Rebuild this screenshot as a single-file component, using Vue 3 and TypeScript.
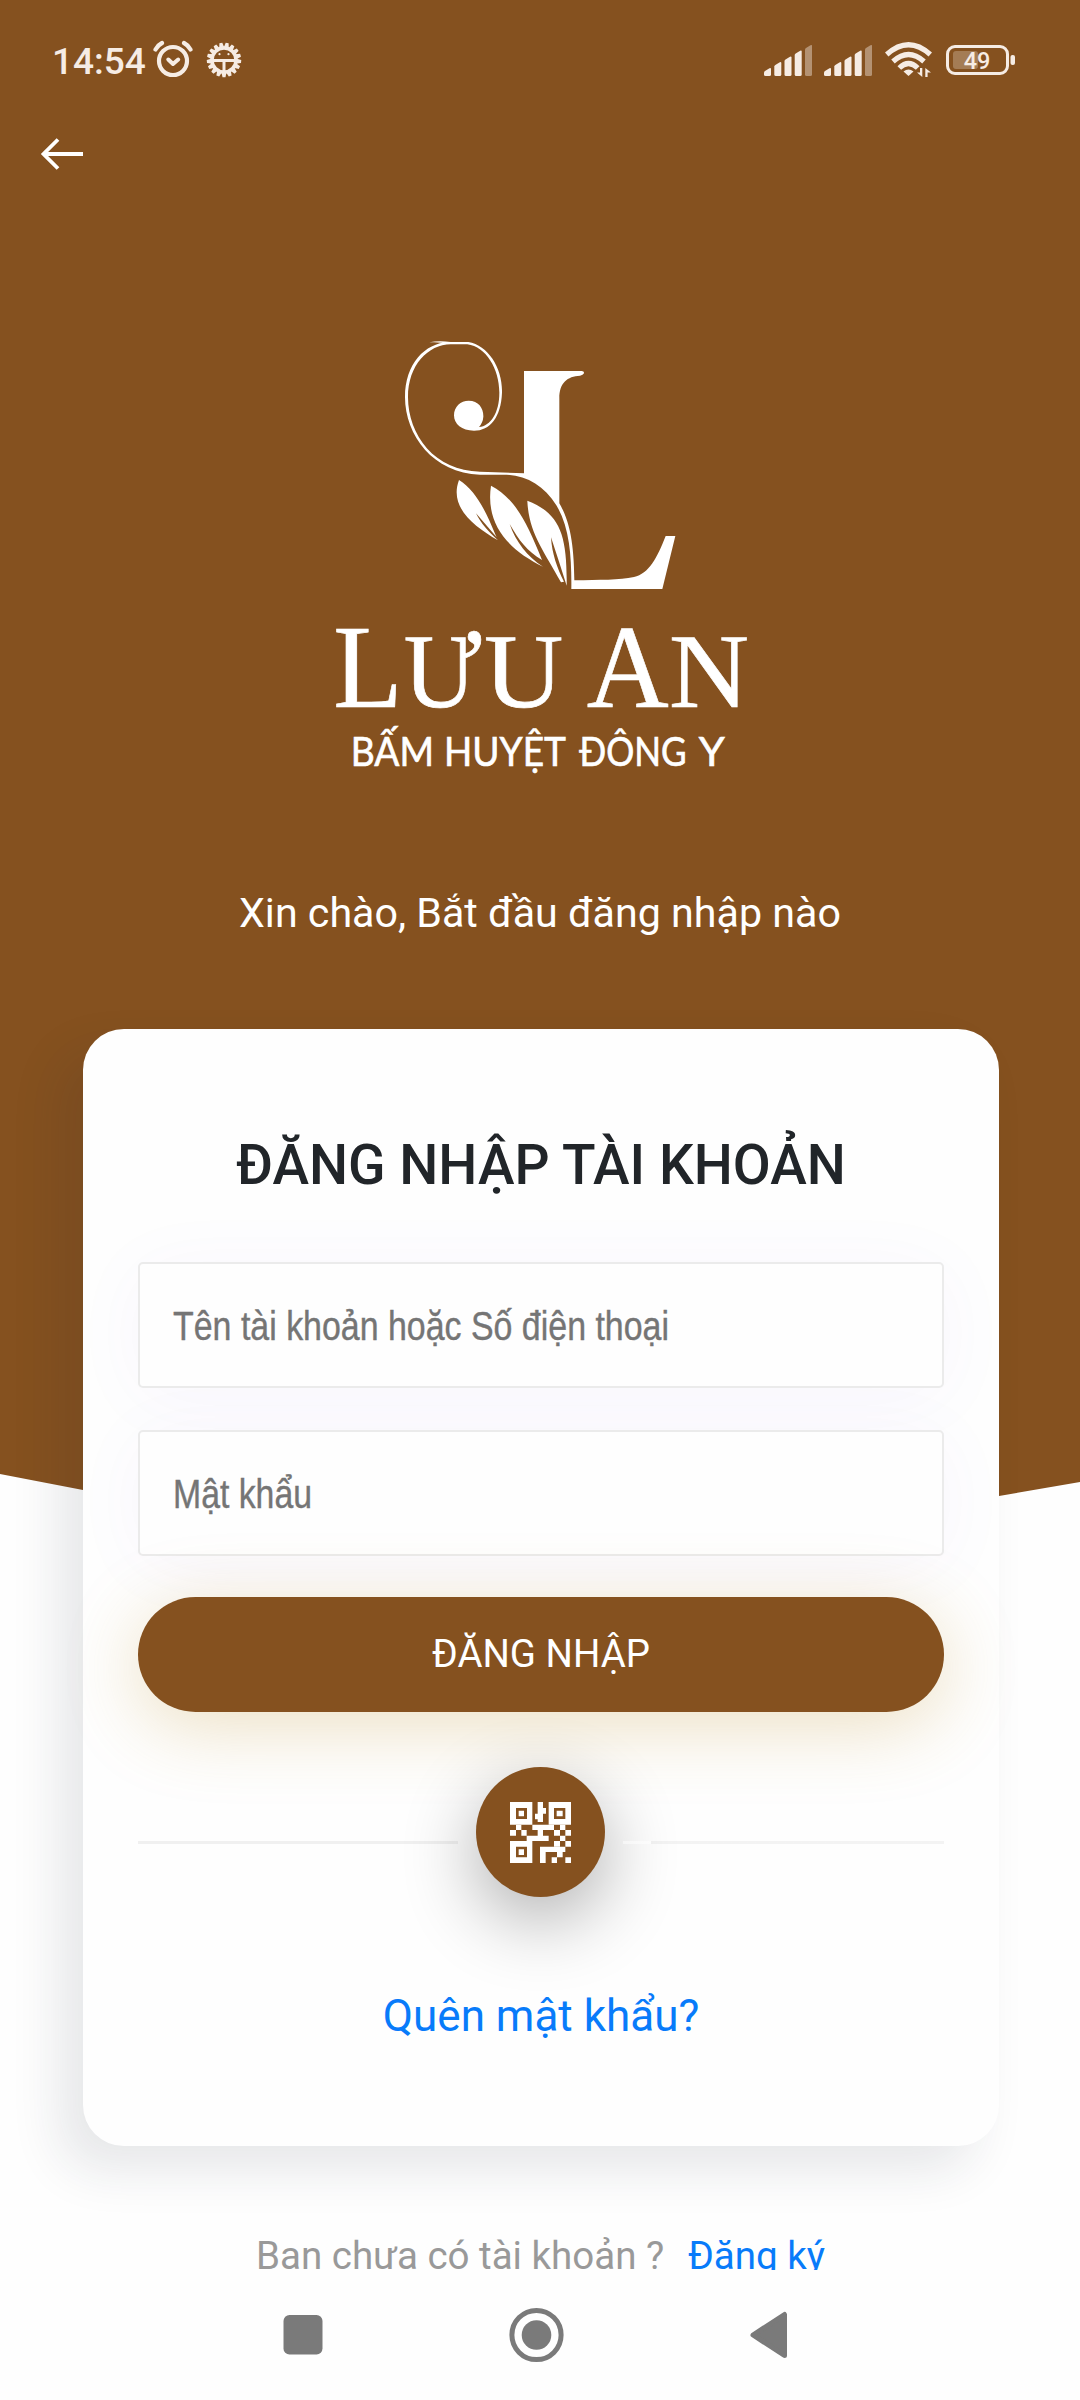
<script setup lang="ts">
interface Bar { x: number; top: number; dim?: boolean }

const bars: Bar[] = [
  { x: 0, top: 23 },
  { x: 10.3, top: 17 },
  { x: 20.5, top: 11.5 },
  { x: 30.7, top: 5.5 },
  { x: 41, top: 0, dim: true },
]
const barPath = (b: Bar): string =>
  `M${b.x + 1.5} 31 h4 q1.5 0 1.5 -1.5 V${b.top + 1} q0 -1.5 -1.5 -.8 L${b.x + 1} ${b.top + 3} q-1 .7 -1 1.6 V29.5 q0 1.5 1.5 1.5z`

const teeth: number[] = Array.from({ length: 17 }, (_, i) => (i * 360) / 17 + 180)

const fields: { id: string; label: string; width: number }[] = [
  { id: 'user', label: 'Tên tài khoản hoặc Số điện thoại', width: 496 },
  { id: 'pass', label: 'Mật khẩu', width: 139 },
]
</script>

<template>
  <div class="screen">
    <svg class="backdrop" width="1080" height="1560" viewBox="0 0 1080 1560">
      <path d="M0 0H1080V1482L999 1496Q540 1570 83 1490L0 1474Z" fill="#85511f" />
    </svg>

    <header class="status">
      <span class="clock">14:54</span>
      <svg class="alarm" width="40" height="38" viewBox="0 0 40 38" fill="none" stroke="#f6ece4">
        <circle cx="20" cy="21" r="14" stroke-width="4.200" />
        <path d="M2.500 9.500Q5 5 9 3M37.500 9.500Q35 5 31 3" stroke-width="4.200" stroke-linecap="round" />
        <path d="M15.300 19.500L20 24L25.200 19.500" stroke-width="4" stroke-linecap="round" stroke-linejoin="round" />
      </svg>
      <svg class="bug" width="36" height="36" viewBox="-18 -18 36 36">
        <path v-for="a in teeth" :key="a" d="M-2.600 -12L-1.500 -17.200H1.500L2.600 -12Z" fill="#f6ece4" :transform="`rotate(${a})`" />
        <circle r="12" fill="none" stroke="#f6ece4" stroke-width="3.400" />
        <path d="M-11 .5H11M0 1V11" stroke="#f6ece4" stroke-width="3" />
        <circle cx="-4.500" cy="-5.800" r="1.100" fill="#f6ece4" />
        <circle cx="4.500" cy="-5.800" r="1.100" fill="#f6ece4" />
      </svg>
      <div class="status-right">
        <svg v-for="n in 2" :key="n" class="signal" width="48" height="31" viewBox="0 0 48 31">
          <path v-for="b in bars" :key="b.x" :d="barPath(b)" fill="#f6ece4" :opacity="b.dim ? 0.42 : 1" />
        </svg>
        <svg class="wifi" width="47" height="36" viewBox="0 0 47 36">
          <g fill="none" stroke="#f6ece4" stroke-width="5.200">
            <path d="M1.700 12.500Q23.500 -7 45.300 12.500" />
            <path d="M8 19.500Q23.500 5.500 39 19.500" />
            <path d="M14.300 26Q23.500 17 32.700 26" />
          </g>
          <path d="M18.500 29.500Q23.500 25.500 28.500 29.500L23.500 34Z" fill="#f6ece4" />
          <path d="M37.300 26V35L32 30.500H35V26ZM40.300 35V26L46 30.500H42.600V35Z" fill="#f6ece4" />
        </svg>
        <svg class="battery" width="70" height="30" viewBox="0 0 70 30">
          <rect x="1.500" y="1.500" width="60" height="27" rx="7.500" fill="none" stroke="#f6ece4" stroke-width="3" />
          <rect x="7" y="6" width="25" height="18" rx="3" fill="#f6ece4" opacity=".28" />
          <rect x="64.500" y="10" width="4.500" height="10" rx="2" fill="#f6ece4" />
          <text x="31" y="24.200" text-anchor="middle" class="level">49</text>
        </svg>
      </div>
    </header>

    <svg class="back" width="44" height="34" viewBox="0 0 44 34" fill="none" stroke="#fff" stroke-width="3.800">
      <path d="M43 17H3.500M18 2.500L3.500 17L18 31.500" />
    </svg>

    <svg class="logo" width="480" height="450" viewBox="0 0 1440 1350">
      <g transform="translate(240 0)" fill="#fff">
        <path d="M148 67Q176 61 212 66L205 71Q176 65 148 67Z" />
        <path d="M205 66H265C325 76 368 145 366 218C363 292 330 332 282 332C245 332 222 312 222 286C222 260 242 242 266 242C296 242 311 265 310 290Q309 307 297 321C332 318 358 278 358 218C358 147 318 80 262 73H212C145 74 84 135 84 232C84 345 165 454 300 455L432 460V153H605Q613 153 612 160Q609 166 600 167C562 169 538 188 538 235V550C565 597 582 655 583 781C660 779 718 781 762 771C807 761 831 714 857 648H886L847 807H574C575 715 570 625 530 557C490 495 437 464 370 464H300C160 461 75 345 75 232C75 130 135 70 205 66Z" />
        <path d="M237 480C284 510 313 562 347 646L350 652L288 580C303 611 325 635 354 661C278 617 207 560 237 480Z" />
        <path d="M333 497C402 533 438 600 486 720C440 692 418 663 389 612C407 665 442 710 489 740C390 692 315 617 333 497Z" />
        <path d="M442 542C540 580 562 645 560 797C546 753 530 703 513 652C516 701 531 744 552 785L543 787C490 690 446 638 442 542Z" />
      </g>
      <g transform="translate(0 840)" fill="#fff">
        <text class="brand" y="322">
          <tspan x="100" font-size="356" textLength="208" lengthAdjust="spacingAndGlyphs">L</tspan><tspan x="311" font-size="318" textLength="232" lengthAdjust="spacingAndGlyphs">Ư</tspan><tspan x="552" font-size="318" textLength="238" lengthAdjust="spacingAndGlyphs">U</tspan>
          <tspan x="860" font-size="356" textLength="246" lengthAdjust="spacingAndGlyphs">A</tspan><tspan x="1107" font-size="318" textLength="240" lengthAdjust="spacingAndGlyphs">N</tspan>
        </text>
        <text class="tagline" y="497">
          <tspan x="152" textLength="250" lengthAdjust="spacingAndGlyphs">BẤM</tspan>
          <tspan x="432" textLength="366" lengthAdjust="spacingAndGlyphs">HUYỆT</tspan>
          <tspan x="838" textLength="322" lengthAdjust="spacingAndGlyphs">ĐÔNG</tspan>
          <tspan x="1196" textLength="78" lengthAdjust="spacingAndGlyphs">Y</tspan>
        </text>
      </g>
    </svg>

    <p class="greeting">Xin chào, Bắt đầu đăng nhập nào</p>

    <main class="card">
      <h1 class="title">ĐĂNG NHẬP TÀI KHOẢN</h1>
      <div class="fields">
        <div v-for="f in fields" :key="f.id" class="field">
          <svg class="hint" :width="f.width" height="60">
            <text x="0" y="46" :textLength="f.width" lengthAdjust="spacingAndGlyphs">{{ f.label }}</text>
          </svg>
        </div>
      </div>
      <button class="submit" type="button">ĐĂNG NHẬP</button>
      <div class="divider">
        <span class="rule"></span>
        <span class="qr">
          <svg width="61" height="61" viewBox="0 0 183 183" fill="#fff" fill-rule="evenodd">
            <path d="M0 0H67V68H0ZM18 18V51H51V18ZM26 26H42V43H26Z" />
            <path d="M116 0H183V68H116ZM132 18V51H166V18ZM140 26H158V43H140Z" />
            <path d="M0 117H67V183H0ZM18 134V166H51V134ZM26 142H42V159H26Z" />
            <path d="M83 0H99V18H108V35H99V60H83V52H75V35H83Z" />
            <path d="M18 68H34V84H18ZM0 84H18V101H0ZM34 84H50V101H34ZM67 68H132V84H99V101H116V117H50V101H83V84H67Z" />
            <path d="M150 68H166V84H150ZM132 84H150V101H132ZM166 84H183V101H166ZM150 101H166V117H150ZM132 117H150V134H132ZM166 117H183V134H166Z" />
            <path d="M90 134H166V150H158V166H141V150H107V183H90ZM125 166H141V183H125ZM166 166H183V183H166Z" />
          </svg>
        </span>
        <span class="rule right"></span>
      </div>
      <a class="forgot">Quên mật khẩu?</a>
    </main>

    <div class="signup"><span class="ask">Bạn chưa có tài khoản ?</span><a class="join">Đăng ký</a></div>

    <nav class="nav">
      <svg width="40" height="56" viewBox="0 0 40 56"><rect x=".5" y="8" width="39" height="39.500" rx="6" fill="#7a7a7a" /></svg>
      <svg width="56" height="56" viewBox="0 0 56 56">
        <circle cx="27.500" cy="28" r="24.600" fill="none" stroke="#7a7a7a" stroke-width="5" />
        <circle cx="27.500" cy="28" r="14.800" fill="#7a7a7a" />
      </svg>
      <svg width="38" height="56" viewBox="0 0 38 56"><path d="M3 28L34.500 7.500V48.500Z" fill="#7a7a7a" stroke="#7a7a7a" stroke-width="5" stroke-linejoin="round" /></svg>
    </nav>
  </div>
</template>

<style>
body { margin: 0; background: #fefefe; }
</style>

<style scoped>
.screen {
  position: relative;
  width: 1080px;
  height: 2400px;
  overflow: hidden;
  display: flex;
  flex-direction: column;
  background: #fefefe;
  font-family: Roboto, "Noto Sans", sans-serif;
}
.backdrop { position: absolute; left: 0; top: 0; z-index: 0; }
.screen > *:not(.backdrop) { z-index: 1; flex-shrink: 0; }
.status { display: flex; align-items: flex-start; height: 137px; color: #f6ece4; }
.clock { width: 99px; margin: 40px 0 0 52px; font-size: 37px; line-height: 44px; font-weight: 500; white-space: nowrap; }
.alarm { margin: 40px 0 0 2px; }
.bug { margin: 42px 0 0 13px; }
.status-right { display: flex; flex: 1; justify-content: flex-end; padding-right: 64px; }
.signal { margin: 45px 12px 0 0; }
.wifi { margin: 42px 14px 0 1px; }
.battery { margin-top: 45px; }
.level { font: 500 23.5px Roboto, sans-serif; fill: #f6ece4; }
.back { margin-left: 40px; }
.logo { margin: 149px 0 0 300px; overflow: visible; }
.brand { font-family: "Liberation Serif", serif; stroke: #fff; stroke-width: 2px; }
.tagline { font-family: Lato, "Noto Sans", sans-serif; font-size: 121px; stroke: #fff; stroke-width: 2px; }
.greeting { margin: 113px 0 0; height: 60px; line-height: 60px; font-size: 41.2px; text-align: center; color: #fff; white-space: nowrap; }
.card {
  display: flex;
  flex-direction: column;
  box-sizing: border-box;
  width: 916px;
  height: 1117px;
  margin: 86px 0 0 83px;
  padding: 96px 55px 0;
  border-radius: 41px;
  background: #fefefe;
  box-shadow: -24px 24px 50px rgba(33, 42, 60, .105);
}
.title { margin: 0; height: 80px; line-height: 80px; font-size: 55.1px; font-weight: 500; text-align: center; color: #212529; white-space: nowrap; }
.fields { display: flex; flex-direction: column; gap: 42px; margin-top: 57px; }
.field {
  box-sizing: border-box;
  height: 126px;
  padding: 30px 0 0 33px;
  border: 2px solid #ebebeb;
  border-radius: 5px;
  background: #fefefe;
  box-shadow: 0 8px 80px rgba(90, 60, 220, .04);
}
.hint { display: block; overflow: visible; font: 40px "Liberation Sans", sans-serif; fill: #757575; stroke: #757575; stroke-width: .4px; }
.submit {
  height: 115px;
  margin-top: 41px;
  padding: 0 0 3px;
  border: 0;
  border-radius: 58px;
  background: #85511f;
  color: #fff;
  font: 38.4px Roboto, sans-serif;
  box-shadow: 0 14px 75px rgba(190, 145, 40, .28);
}
.divider { display: flex; align-items: center; margin-top: 55px; height: 130px; }
.rule { width: 320px; height: 3px; margin-top: 21px; background: rgba(0, 0, 0, .055); }
.rule.right { width: 321px; margin-left: 18px; background: linear-gradient(90deg, rgba(255, 255, 255, .5) 0 28px, rgba(0, 0, 0, .045) 28px); }
.qr { display: flex; align-items: center; justify-content: center; width: 129px; height: 130px; margin-left: 18px; border-radius: 50%; background: #85511f; box-shadow: 0 22px 75px rgba(0, 0, 0, .32); }
.forgot { margin-top: 89px; height: 60px; line-height: 60px; font-size: 44px; text-align: center; color: #087bfa; white-space: nowrap; }
.signup { display: flex; margin: 84px 0 0 256px; height: 40px; overflow: hidden; line-height: 52px; font-size: 38.5px; white-space: nowrap; }
.ask { width: 432px; color: #999; }
.join { color: #087bfa; }
.nav { display: flex; justify-content: space-between; margin: 37px 292px 0 283px; }
</style>
